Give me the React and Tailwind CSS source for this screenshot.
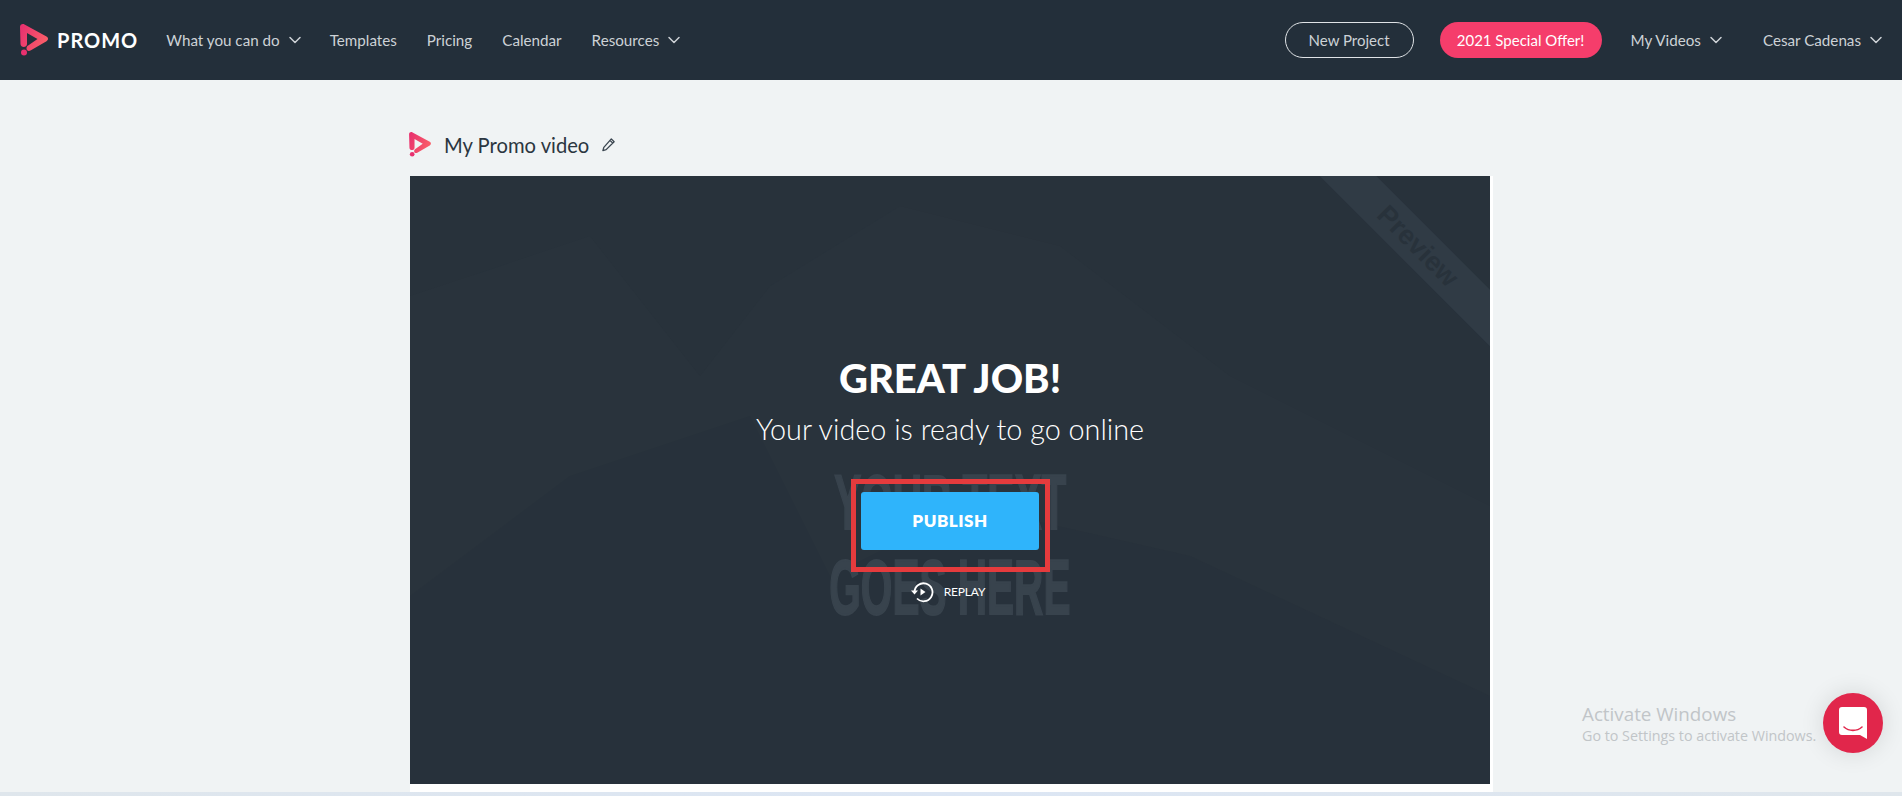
import React from "react";
import { ChevronDown } from "lucide-react";

const sans = "font-['Lato','Liberation_Sans',sans-serif]";

function Logo({ className, id }) {
  return (
    <svg viewBox="0 0 28 32" className={className}>
      <defs>
        <linearGradient id={id} x1="0" y1="0.2" x2="1" y2="0.6">
          <stop offset="0" stopColor="#e8316f" />
          <stop offset="1" stopColor="#fa5f68" />
        </linearGradient>
      </defs>
      <path d="M0 3C0 .5 2.500-.6 4.500.5L26.500 12.500C28.500 13.700 28.500 16 26.500 17.200L10.500 26.500C8.500 27.600 6.500 26.500 6.500 24.500C6.500 23 7.200 22 8.500 21.300L17.500 15L7 9V20C7 24 .5 24 .5 20Z" fill={`url(#${id})`} />
      <circle cx="4" cy="28.500" r="3" fill="#e8316f" />
    </svg>
  );
}

function NavItem({ children, chevron }) {
  return (
    <a className="flex items-center gap-[5px] text-[15.200px] text-[#cdd2d6]">
      {children}
      {chevron && <ChevronDown size={20} strokeWidth={1.800} className="-mr-[5px] text-[#cdd2d6]" />}
    </a>
  );
}

export default function App() {
  return (
    <div className={`relative flex h-[796px] w-[1902px] flex-col overflow-hidden bg-[#f0f3f4] ${sans}`}>
      <header className="flex h-[80px] shrink-0 items-center bg-[#232f3a] pl-[20px] pr-[21px]">
        <Logo id="logo-a" className="h-[32px] w-[28px]" />
        <span className="ml-[9px] text-[20px] font-bold tracking-[1px] text-white">PROMO</span>
        <nav className="ml-[28px] flex items-center gap-[30px]">
          <NavItem chevron>What you can do</NavItem>
          <NavItem>Templates</NavItem>
          <NavItem>Pricing</NavItem>
          <NavItem>Calendar</NavItem>
          <NavItem chevron>Resources</NavItem>
        </nav>
        <div className="ml-auto flex items-center">
          <a className="flex h-[36px] w-[129px] items-center justify-center rounded-full border border-[#dfe3e6] text-[15px] text-[#cdd2d6]">New Project</a>
          <a className="ml-[26px] flex h-[36px] w-[162px] items-center justify-center rounded-full bg-[#f53d6b] text-[15px] text-white">2021 Special Offer!</a>
          <div className="ml-[29px]"><NavItem chevron>My Videos</NavItem></div>
          <div className="ml-[42px]"><NavItem chevron>Cesar Cadenas</NavItem></div>
        </div>
      </header>

      <main className="ml-[410px] flex w-[1083px] flex-1 flex-col">
        <div className="flex h-[96px] items-center pt-[33px]">
          <Logo id="logo-b" className="-ml-[1px] h-[25px] w-[22px]" />
          <h1 className="ml-[13px] mt-[1px] text-[20.200px] font-normal text-[#2b3640]">My Promo video</h1>
          <svg viewBox="0 0 16 16" className="ml-[12px] h-[15px] w-[15px]" fill="none" stroke="#3b4650" strokeWidth="1.400">
            <path d="M11 2l3 3-8.500 8.500L2 14.500l1-3.500zM9.500 3.500l3 3" strokeLinejoin="round" />
          </svg>
        </div>

        <div className="flex flex-col bg-white pb-[8px]">
          <section className="relative flex h-[608px] w-[1080px] flex-col items-center overflow-hidden bg-[#28323b]">
            <svg viewBox="0 0 1080 608" className="absolute inset-0 h-full w-full">
              <path d="M0 120L180 60L290 200L360 110L490 30L650 70L820 200L1080 330V608H0Z" fill="#2b3640" opacity="0.2" />
              <path d="M0 420L160 300L340 240L420 400L560 330L780 380L1080 520V608H0Z" fill="#252f38" opacity="0.35" />
            </svg>

            <div className="absolute left-[858px] top-[50px] flex h-[40px] w-[300px] rotate-45 items-center justify-center bg-[#303b45]">
              <span className="font-['Liberation_Sans',sans-serif] text-[27px] font-bold text-[#28323b]">Preview</span>
            </div>

            <div className="absolute left-[420px] top-[284px] flex w-[240px] flex-col items-center font-['Liberation_Sans',sans-serif] text-[78px] font-bold leading-[85px] text-[#38434d] [-webkit-text-stroke:2px_#38434d]">
              <span className="scale-x-[0.52] whitespace-nowrap">YOUR TEXT</span>
              <span className="scale-x-[0.52] whitespace-nowrap">GOES HERE</span>
            </div>

            <div className="relative mt-[180px] text-[40px] font-black leading-[44px] text-white">GREAT JOB!</div>
            <div className="relative mt-[11px] text-[28.800px] font-light leading-[36px] text-white">Your video is ready to go online</div>
            <div className="relative mt-[32px] flex h-[93px] w-[199px] items-start justify-center border-[5px] border-[#e53b3d] pt-[8px]">
              <button className="flex h-[58px] w-[178px] items-center justify-center rounded-[3px] bg-[#2fb4fb] text-[17px] font-extrabold tracking-[0.5px] text-white">PUBLISH</button>
            </div>
            <div className="relative mr-[5px] mt-[8px] flex items-center gap-[10px] text-white">
              <svg viewBox="0 0 24 24" className="h-[24px] w-[24px]" fill="none" stroke="#fff" strokeWidth="1.800">
                <path d="M4.500 12A9 9 0 1 1 7 18.500" />
                <path d="M1 10.500h7L4.500 14.500z" fill="#fff" stroke="none" />
                <path d="M10.500 8.500l5 3.500-5 3.500z" fill="#fff" stroke="none" />
              </svg>
              <span className="text-[12px] tracking-[-0.2px]">REPLAY</span>
            </div>
          </section>
        </div>
      </main>

      <div className="h-[4px] shrink-0 bg-gradient-to-r from-[#dfe6ec] via-[#dce6f4] to-[#dfe6ec]" />

      <div className="absolute left-[1582px] top-[702px] font-['Open_Sans',sans-serif] text-[#c1c5c8]">
        <div className="text-[18.800px] leading-[24px]">Activate Windows</div>
        <div className="text-[14.300px] leading-[20px]">Go to Settings to activate Windows.</div>
      </div>

      <div className="absolute left-[1823px] top-[693px] flex h-[60px] w-[60px] items-center justify-center rounded-full bg-[#e1264b] shadow-[0_0_24px_rgba(0,0,0,0.12)]">
        <svg viewBox="0 0 28 32" className="h-[32px] w-[28px]">
          <path d="M3 0H25A3 3 0 0 1 28 3V32L21 28H3A3 3 0 0 1 0 25V3A3 3 0 0 1 3 0Z" fill="#fff" />
          <path d="M5 20C10 24.500 18 24.500 23 20" fill="none" stroke="#e1264b" strokeWidth="1.600" strokeLinecap="round" />
        </svg>
      </div>
    </div>
  );
}
